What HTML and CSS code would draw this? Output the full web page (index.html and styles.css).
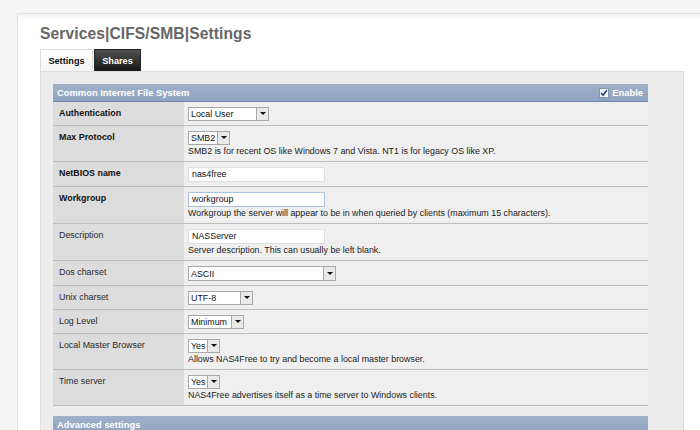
FILE: index.html
```html
<!DOCTYPE html>
<html>
<head>
<meta charset="utf-8">
<link rel="stylesheet" href="styles.css">
</head>
<body>
<div class="page">
  <h1 class="title">Services|CIFS/SMB|Settings</h1>
  <div class="tabs">
    <span class="tab tab-active">Settings</span><span class="tab tab-dark">Shares</span>
  </div>
  <div class="content">
    <table class="form">
      <tr>
        <td colspan="2" class="headbar">
          <div class="headrow">
            <span>Common Internet File System</span>
            <span class="enable">
              <svg class="chk" width="10" height="10" viewBox="0 0 10 10">
                <defs><linearGradient id="g" x1="0" y1="0" x2="1" y2="1"><stop offset="0" stop-color="#e9edf2"/><stop offset="1" stop-color="#ffffff"/></linearGradient></defs>
                <rect x="0.5" y="0.5" width="9" height="9" fill="url(#g)" stroke="#8a97a9"/>
                <path d="M2.2 5 L4 7.2 L7.9 2.2" fill="none" stroke="#22408a" stroke-width="1.6"/>
              </svg>Enable</span>
          </div>
        </td>
      </tr>
      <tr>
        <td class="lbl req">Authentication</td>
        <td class="val"><span class="sel w-auth">Local User<i class="btn"></i></span></td>
      </tr>
      <tr>
        <td class="lbl req">Max Protocol</td>
        <td class="val"><span class="sel w-smb">SMB2<i class="btn"></i></span><div class="desc">SMB2 is for recent OS like Windows 7 and Vista. NT1 is for legacy OS like XP.</div></td>
      </tr>
      <tr>
        <td class="lbl req">NetBIOS name</td>
        <td class="val"><span class="inp">nas4free</span></td>
      </tr>
      <tr>
        <td class="lbl req">Workgroup</td>
        <td class="val"><span class="inp inp-focus">workgroup</span><div class="desc">Workgroup the server will appear to be in when queried by clients (maximum 15 characters).</div></td>
      </tr>
      <tr>
        <td class="lbl">Description</td>
        <td class="val"><span class="inp">NASServer</span><div class="desc">Server description. This can usually be left blank.</div></td>
      </tr>
      <tr>
        <td class="lbl">Dos charset</td>
        <td class="val"><span class="sel sel-tall w-ascii">ASCII<i class="btn"></i></span></td>
      </tr>
      <tr>
        <td class="lbl">Unix charset</td>
        <td class="val"><span class="sel w-utf">UTF-8<i class="btn"></i></span></td>
      </tr>
      <tr>
        <td class="lbl">Log Level</td>
        <td class="val"><span class="sel w-min">Minimum<i class="btn"></i></span></td>
      </tr>
      <tr>
        <td class="lbl">Local Master Browser</td>
        <td class="val"><span class="sel w-yes">Yes<i class="btn"></i></span><div class="desc">Allows NAS4Free to try and become a local master browser.</div></td>
      </tr>
      <tr>
        <td class="lbl">Time server</td>
        <td class="val"><span class="sel w-yes">Yes<i class="btn"></i></span><div class="desc">NAS4Free advertises itself as a time server to Windows clients.</div></td>
      </tr>
    </table>
    <div class="bar2">Advanced settings</div>
  </div>
</div>
</body>
</html>
```
FILE: styles.css
```css
html, body {
  margin: 0;
  padding: 0;
}
body {
  background: #f4f4f4;
  height: 430px;
  overflow: hidden;
  font-family: "Liberation Sans", Arial, sans-serif;
  font-size: 8.9px;
  color: #222;
}
.page {
  margin: 13px 0 0 17px;
  width: 644px;
  height: 417px;
  box-sizing: content-box;
  overflow: hidden;
  background: #fff;
  border: 1px solid #e3e3dd;
  border-bottom: none;
  padding: 0 22px;
  box-shadow: inset 0 6px 6px -4px #ececec;
}
.title {
  margin: 0;
  padding-top: 11px;
  font-size: 15.6px;
  line-height: 18px;
  font-weight: bold;
  color: #666;
  letter-spacing: 0.1px;
}
.tabs {
  display: flex;
  margin-top: 6px;
  height: 22px;
}
.tab {
  display: flex;
  align-items: center;
  justify-content: center;
  box-sizing: border-box;
  height: 22px;
  font-weight: bold;
  font-size: 9.2px;
}
.tab-active {
  width: 53px;
  background: linear-gradient(#ffffff, #f4f4f4);
  border: 1px solid #dcdcdc;
  border-bottom: none;
  color: #111;
}
.tab-dark {
  width: 47px;
  margin-left: 1px;
  background: linear-gradient(#505050, #181818);
  border: 1px solid #222;
  border-bottom: none;
  color: #fff;
}
.content {
  background: #ececec;
  border: 1px solid #dedede;
  padding: 12px 12px 0 12px;
  height: 400px;
}
.form {
  width: 595px;
  border-collapse: collapse;
  border-spacing: 0;
}
.headbar {
  height: 18px;
  padding: 0;
}
.headrow, .bar2 {
  display: flex;
  justify-content: space-between;
  align-items: center;
  box-sizing: border-box;
  height: 18px;
  padding: 0 4px 0 4px;
  background: linear-gradient(#9fb1c9, #8fa3c0);
  border-bottom: 1px solid #7089ad;
  color: #fff;
  font-weight: bold;
  font-size: 9.4px;
}
.enable {
  display: flex;
  align-items: center;
  gap: 3px;
  padding-right: 1px;
}
.chk {
  display: block;
}
.lbl {
  width: 125px;
  background: #dcdcdc;
  padding: 5px 0 4px 6px;
  vertical-align: top;
  line-height: 12px;
  color: #2a2a2a;
  border-bottom: 1px solid #bcbcbc;
}
.req {
  font-weight: bold;
  color: #111;
}
.val {
  background: #efefef;
  padding: 5px 4px 4px 4px;
  vertical-align: top;
  line-height: 12px;
  border-bottom: 1px solid #bcbcbc;
}
.desc {
  color: #222;
  line-height: 12px;
}
.sel {
  display: flex;
  align-items: center;
  justify-content: space-between;
  box-sizing: border-box;
  height: 14px;
  background: #fff;
  border: 1px solid #a8a8a8;
  padding-left: 2px;
  color: #111;
  line-height: 12px;
  white-space: nowrap;
}
.sel-tall {
  height: 15px;
}
.btn {
  display: block;
  flex: none;
  width: 12px;
  height: 100%;
  box-sizing: border-box;
  border-left: 1px solid #a8a8a8;
  background: #e9e9e9;
  position: relative;
}
.btn::after {
  content: "";
  position: absolute;
  left: 3px;
  top: 4px;
  border-left: 3px solid transparent;
  border-right: 3px solid transparent;
  border-top: 3px solid #111;
}
.sel-tall .btn::after {
  top: 5px;
}
.w-auth { width: 81px; }
.w-smb { width: 42px; }
.w-ascii { width: 148px; }
.w-utf { width: 65px; }
.w-min { width: 56px; }
.w-yes { width: 32px; }
.inp {
  display: block;
  box-sizing: border-box;
  width: 137px;
  height: 15px;
  background: #fff;
  border: 1px solid #dedede;
  padding: 0 3px;
  line-height: 13px;
  color: #111;
}
.inp-focus {
  border-color: #a9c4e2;
}
.bar2 {
  margin-top: 10px;
  width: 595px;
}
```
